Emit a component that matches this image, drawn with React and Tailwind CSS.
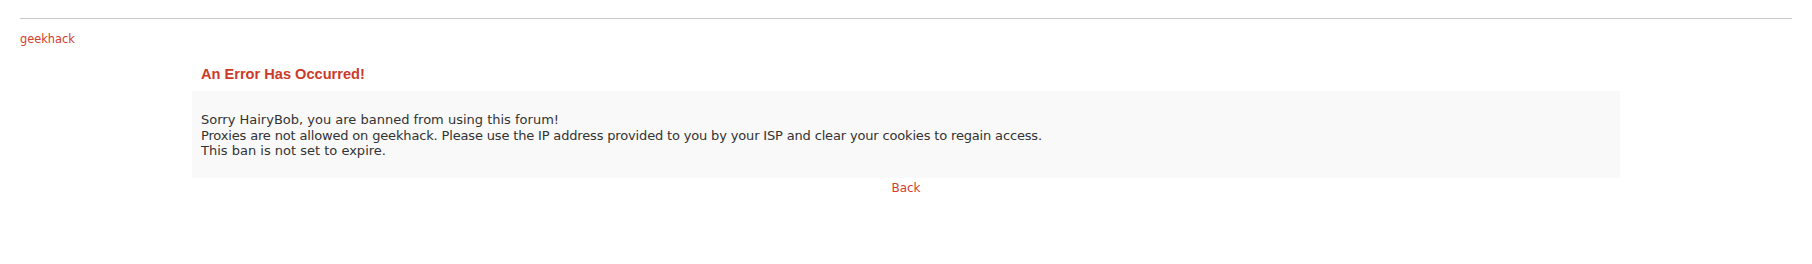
export default function App() {
  return (
    <div className="min-h-[264px] bg-white px-[20px] pt-[18px] font-['DejaVu_Sans',Verdana,sans-serif] text-[#333]">
      <div className="border-t border-[#c8c8c8]" />

      <a href="#" className="mt-[13px] block text-[11.4px] leading-[14px] text-[#d4402e]">
        geekhack
      </a>

      <div className="mx-[172px]">
        <h3 className="mt-[19px] pl-[9px] font-['Liberation_Sans',Arial,sans-serif] text-[14.6px] font-bold leading-[18px] text-[#cc3a29]">
          An Error Has Occurred!
        </h3>

        <div className="mt-[8px] bg-[#f9f9f9] pt-[21px] pb-[19px] pl-[9px] text-[13px] leading-[15.6px] text-[#333333]">
          <div>Sorry HairyBob, you are banned from using this forum!</div>
          <div className="tracking-[-0.16px]">
            Proxies are not allowed on geekhack. Please use the IP address provided to you by your ISP and clear your cookies to regain access.
          </div>
          <div>This ban is not set to expire.</div>
        </div>

        <div className="mt-[3px] text-center text-[12px] leading-[14px]">
          <a href="#" className="text-[#d4402e]">
            Back
          </a>
        </div>
      </div>
    </div>
  );
}
